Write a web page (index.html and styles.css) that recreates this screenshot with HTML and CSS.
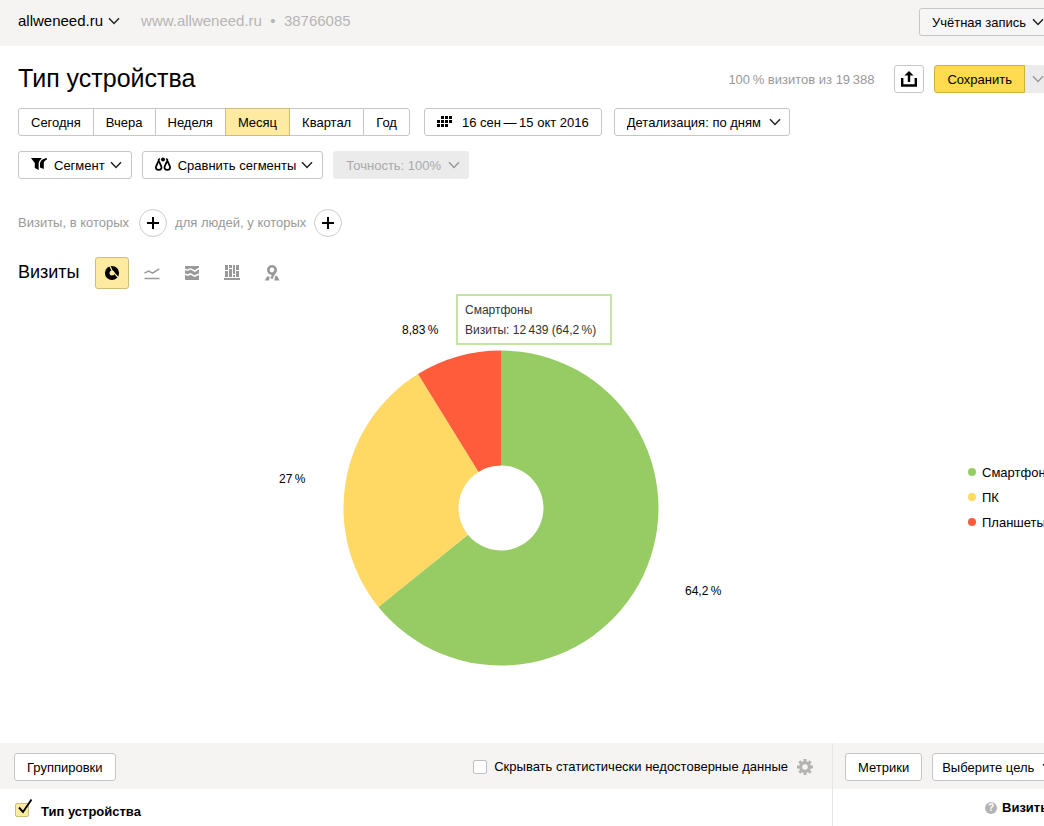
FILE: index.html
```html
<!DOCTYPE html>
<html lang="ru">
<head>
<meta charset="utf-8">
<title>Тип устройства</title>
<meta name="viewport" content="width=device-width, initial-scale=1">
<link rel="stylesheet" href="styles.css">
</head>
<body>
<svg class="sprite" aria-hidden="true">
  <symbol id="chevron" viewBox="0 0 12 8"><path d="M1 1.2 6 6.4 11 1.2" fill="none" stroke="currentColor" stroke-width="1.5"/></symbol>
  <symbol id="plus" viewBox="0 0 12 12"><path d="M6 0v12M0 6h12" stroke="currentColor" stroke-width="2"/></symbol>
</svg>

<header class="topbar">
  <button class="site" type="button">allweneed.ru <svg class="chevron"><use href="#chevron"/></svg></button>
  <span class="site-info">www.allweneed.ru&nbsp; •&nbsp; 38766085</span>
  <button class="btn account" type="button">Учётная запись <svg class="chevron"><use href="#chevron"/></svg></button>
</header>

<main>
  <div class="title-row">
    <h1>Тип устройства</h1>
    <span class="sample">100&#8201;% визитов из 19&#8201;388</span>
    <button class="btn export" type="button" aria-label="Экспорт">
      <svg width="16" height="16" viewBox="0 0 16 16"><path d="M1.2 7v7.5h13.6V7" fill="none" stroke="#000" stroke-width="2.4"/><path d="M8 0l4.6 4.6H9.2V11H6.8V4.6H3.4z"/></svg>
    </button>
    <div class="save-group">
      <button class="btn save" type="button">Сохранить</button>
      <button class="save-more" type="button" aria-label="Ещё" disabled><svg class="chevron"><use href="#chevron"/></svg></button>
    </div>
  </div>

  <div class="toolbar">
    <div class="periods" role="group" aria-label="Период">
      <button type="button">Сегодня</button>
      <button type="button">Вчера</button>
      <button type="button">Неделя</button>
      <button class="active" type="button" aria-pressed="true">Месяц</button>
      <button type="button">Квартал</button>
      <button type="button">Год</button>
    </div>
    <button class="btn dates" type="button">
      <svg width="16" height="12" viewBox="0 0 16 12"><path d="M4 0h3v3H4zM8 0h3v3H8zM12 0h3v3h-3zM0 4h3v3H0zM4 4h3v3H4zM8 4h3v3H8zM12 4h3v3h-3zM0 8h3v3H0zM4 8h3v3H4zM8 8h3v3H8z"/></svg>
      16 сен&#8201;—&#8201;15 окт 2016
    </button>
    <div class="picker">
      <select aria-label="Детализация"><option>Детализация: по дням</option></select>
      <svg class="chevron"><use href="#chevron"/></svg>
    </div>
  </div>

  <div class="toolbar segments">
    <button class="btn" type="button">
      <svg class="lead" width="16" height="14" viewBox="0 0 16 14"><path d="M0 1h11L7.8 5.6V13L3.8 11V6z"/><path d="M16 1.2V2.6C14 3.4 13 4.6 12.8 6V12L9 10.6V6.4C9.4 3.6 12 1.2 16 1.2z"/><path d="M11.6 1.2C9.4 2.8 8.4 4.4 8.3 6.4V12" fill="none" stroke="#fff" stroke-width=".9"/></svg>
      Сегмент <svg class="chevron"><use href="#chevron"/></svg>
    </button>
    <button class="btn" type="button">
      <svg class="lead" width="16" height="14" viewBox="0 0 16 14"><path d="M3.7 3.6 1.4 8.6C.2 11.2 1.4 12.9 3.7 12.9S7.2 11.2 6 8.6zM12.3 3.6 10 8.6c-1.2 2.6 0 4.3 2.3 4.3s3.5-1.7 2.3-4.3z" fill="none" stroke="#000" stroke-width="1.8"/><path d="M3 3 5 1.6M13 3 11 1.6" stroke="#000" stroke-width="1.3"/><circle cx="8" cy="2.4" r="2"/></svg>
      Сравнить сегменты <svg class="chevron"><use href="#chevron"/></svg>
    </button>
    <div class="picker picker-off">
      <select aria-label="Точность" disabled><option>Точность: 100%</option></select>
      <svg class="chevron"><use href="#chevron"/></svg>
    </div>
  </div>

  <div class="filters">
    <span>Визиты, в которых</span>
    <button class="add" type="button" aria-label="Добавить условие визита"><svg width="12" height="12"><use href="#plus"/></svg></button>
    <span>для людей, у которых</span>
    <button class="add" type="button" aria-label="Добавить условие для людей"><svg width="12" height="12"><use href="#plus"/></svg></button>
  </div>

  <div class="views">
    <h2>Визиты</h2>
    <button class="view active" type="button" aria-label="Круговая диаграмма">
      <svg width="16" height="16" viewBox="0 0 16 16"><circle cx="8" cy="8" r="4.8" fill="none" stroke="#000" stroke-width="4.6"/><path d="M5.4 0 8.2 6 15 13.4" fill="none" stroke="#ffeba0" stroke-width="1.3"/></svg>
    </button>
    <button class="view" type="button" aria-label="Линии">
      <svg width="16" height="16" viewBox="0 0 16 16"><path d="M.5 8.2 4.6 6l4 2.2 6.6-4.4M.5 13.4h15" fill="none" stroke="currentColor" stroke-width="1.5"/></svg>
    </button>
    <button class="view" type="button" aria-label="Области">
      <svg width="16" height="16" viewBox="0 0 16 16"><path d="M1 1h14v1.4L10.6 5.2 6.4 3 3.6 4.4 1 3.4zM1 5l2.8 1 2.6-1.4 4.4 2.4L15 4.4v3.8l-4.6 2L6.4 8 3.8 9.2 1 8.4zM1 10l3 1 2.4-1.2 4.2 2.2 4.4-2V15H1z"/></svg>
    </button>
    <button class="view" type="button" aria-label="Столбцы">
      <svg width="16" height="16" viewBox="0 0 16 16"><path d="M1 0h3v5H1zM1 6h3v6H1zM5 0h3v3H5zM5 4h3v8H5zM9 0h2v9H9zM9 10h2v2H9zM12 0h3v5h-3zM12 6h3v6h-3zM0 13h16v2H0z"/></svg>
    </button>
    <button class="view" type="button" aria-label="Карта">
      <svg width="16" height="16" viewBox="0 0 16 16"><circle cx="8" cy="5" r="3.7" fill="none" stroke="currentColor" stroke-width="2.6"/><path d="M11 6.4 7.4 13.6" stroke="currentColor" stroke-width="2.4"/><path d="M3 11.5h2.6L5 15.5H.8zM11.4 10.8h1.6l2.6 4.7h-5.4z"/></svg>
    </button>
  </div>

  <section class="chart">
    <div class="plot">
      <svg width="460" height="346" viewBox="271 320 460 346" role="img" aria-label="Визиты по типу устройства">
        <path fill="#97cc64" d="M501 350.5A157.5 157.5 0 1 1 378.4 606.9L467.9 534.7A42.5 42.5 0 1 0 501 465.5z"/>
        <path fill="#ffd963" d="M378.4 606.9A157.5 157.5 0 0 1 418 374.1L478.6 471.9A42.5 42.5 0 0 0 467.9 534.7z"/>
        <path fill="#ff5c3c" d="M418 374.1A157.5 157.5 0 0 1 501 350.5V465.5A42.5 42.5 0 0 0 478.6 471.9z"/>
        <text x="402" y="334">8,83&#8201;%</text>
        <text x="279" y="483">27&#8201;%</text>
        <text x="685" y="595">64,2&#8201;%</text>
      </svg>
      <div class="tip">Смартфоны<br>Визиты: 12&#8201;439 (64,2&#8201;%)</div>
    </div>
    <ul class="legend">
      <li class="phones">Смартфоны</li>
      <li class="desktops">ПК</li>
      <li class="tablets">Планшеты</li>
    </ul>
  </section>

  <section class="data">
    <div class="bar bar-left">
      <button class="btn" type="button">Группировки</button>
      <label class="hide-noise"><input type="checkbox"> Скрывать статистически недостоверные данные</label>
      <button class="gear" type="button" aria-label="Настройки">
        <svg width="16" height="16" viewBox="0 0 16 16"><circle cx="8" cy="8" r="4.4" fill="none" stroke="currentColor" stroke-width="3.2"/><path d="M8 0v3M8 13v3M0 8h3M13 8h3M2.3 2.3l2 2M11.7 11.7l2 2M13.7 2.3l-2 2M4.3 11.7l-2 2" stroke="currentColor" stroke-width="3"/></svg>
      </button>
    </div>
    <div class="bar bar-right">
      <button class="btn" type="button">Метрики</button>
      <div class="picker goal">
        <select aria-label="Цель"><option>Выберите цель</option></select>
        <svg class="chevron"><use href="#chevron"/></svg>
      </div>
    </div>
    <div class="head head-left">
      <label class="group">
        <span class="check"><input type="checkbox" checked><svg width="18" height="18" viewBox="0 0 18 18"><path d="M4 9.5 8 14 16.5 1.5" fill="none" stroke="#000" stroke-width="1.9"/></svg></span>
        Тип устройства
      </label>
    </div>
    <div class="head head-right">
      <span class="help">?</span><b>Визиты</b>
    </div>
  </section>
</main>
</body>
</html>
```

FILE: styles.css
```css
* { box-sizing: border-box; }

body {
  margin: 0;
  overflow: hidden;
  background: #fff;
  color: #000;
  font: 13px/16px "Liberation Sans", Arial, sans-serif;
  white-space: nowrap;
}

h1, h2, ul { margin: 0; padding: 0; font-weight: normal; }
button, select { font: inherit; color: inherit; margin: 0; }
svg { display: block; flex: none; fill: currentColor; }
.sprite { position: absolute; width: 0; height: 0; }
.chevron { width: 12px; height: 8px; color: #222; }

.btn, .picker select {
  height: 28px;
  padding: 2px 12px 0;
  border: 1px solid #c6c6c6;
  border-radius: 3px;
  background: #fff;
}
.btn { display: flex; align-items: center; gap: 6px; flex: none; }
.btn .chevron { margin-bottom: 2px; }
.lead { margin: 0 2px 4px 0; }

.picker { position: relative; flex: none; }
.picker select {
  display: block;
  appearance: none;
  padding-right: 27px;
  opacity: 1;
}
.picker .chevron { position: absolute; right: 9px; top: 10px; pointer-events: none; }
.picker-off select { background: #ebebeb; border-color: #ebebeb; color: #aaa; }
.picker-off .chevron { color: #999; }

.topbar {
  display: flex;
  align-items: center;
  height: 46px;
  padding: 0 0 2px 18px;
  background: #f5f4f3;
  font-size: 15px;
}
.site {
  display: flex;
  align-items: center;
  gap: 5px;
  padding: 0 0 2px;
  border: 0;
  background: none;
}
.site-info { flex: 1; padding: 0 0 2px 21px; color: #b5b5b5; }
.account { font-size: 13px; background: #f7f6f6; margin-right: -13px; }

.title-row {
  display: flex;
  align-items: center;
  height: 28px;
  margin: 19px -8px 15px 18px;
}
h1 { flex: 1; padding-bottom: 2px; font-size: 25px; line-height: 28px; }
.sample { padding-top: 1px; color: #999; }
.export { width: 30px; margin: 0 10px 0 20px; padding: 0; justify-content: center; }
.save-group { display: flex; }
.save { background: #ffdb4d; border-color: #ccaf3d; border-radius: 3px 0 0 3px; }
.save-more { width: 27px; padding: 0 7px; border: 0; background: #ebebeb; }
.save-more .chevron { color: #999; }

.toolbar { display: flex; padding-left: 18px; margin-bottom: 15px; }
.periods { display: flex; margin-right: 14px; }
.periods button {
  height: 28px;
  margin-left: -1px;
  padding: 2px 12px 0;
  border: 1px solid #c6c6c6;
  background: #fff;
}
.periods button:first-child { margin-left: 0; border-radius: 3px 0 0 3px; }
.periods button:last-child { border-radius: 0 3px 3px 0; }
.periods .active { position: relative; background: #ffeba0; border-color: #ccbc80; }
.dates { margin-right: 12px; gap: 9px; }
.dates svg { margin-bottom: 2px; }
.segments { gap: 10px; margin-bottom: 30px; }
.segments .btn { gap: 5px; padding-right: 9px; }

.filters { display: flex; align-items: center; gap: 8px; padding-left: 18px; margin-bottom: 20px; color: #999; }
.add {
  display: flex;
  align-items: center;
  justify-content: center;
  width: 28px;
  height: 28px;
  padding: 0;
  border: 1px solid #ccc;
  border-radius: 50%;
  background: #fff;
  color: #000;
}
.filters span:first-child { margin-right: 2px; }

.views { display: flex; align-items: center; padding-left: 18px; }
h2 { margin-right: 15px; padding-bottom: 2px; font-size: 18px; line-height: 20px; }
.view {
  display: flex;
  align-items: center;
  justify-content: center;
  width: 34px;
  height: 32px;
  margin-right: 6px;
  padding: 0;
  border: 1px solid transparent;
  border-radius: 3px;
  background: none;
  color: #999;
}
.view.active { background: #ffeba0; border-color: #ccbc80; }

.chart { display: flex; align-items: center; padding: 31px 0 77px 34px; font-size: 12px; }
.plot { position: relative; flex: 1; display: flex; justify-content: center; }
.tip {
  position: absolute;
  left: calc(50% - 45px);
  top: -26px;
  padding: 4px 14px 3px 7px;
  border: 2px solid #c3e4a3;
  background: #fff;
  color: #333;
  line-height: 20px;
}
.legend { width: 76px; padding-top: 8px; list-style: none; font-size: 13px; line-height: 25px; }
.legend li { display: flex; align-items: center; gap: 6px; }
.legend li::before { content: ""; flex: none; width: 8px; height: 8px; border-radius: 50%; }
.phones::before { background: #97cc64; }
.desktops::before { background: #ffd963; }
.tablets::before { background: #ff5c3c; }

.data { display: grid; grid-template-columns: minmax(0, 1fr) 212px; }
.bar { display: flex; align-items: center; height: 46px; padding: 2px 0 0; background: #f5f4f3; }
.bar-left { padding-left: 14px; padding-right: 19px; }
.bar-right { padding-left: 12px; gap: 10px; border-left: 1px solid #e5e5e5; }
.goal select { padding-left: 9px; }
.hide-noise { display: flex; align-items: center; gap: 7px; margin-left: auto; }
input[type="checkbox"] {
  appearance: none;
  flex: none;
  width: 14px;
  height: 14px;
  margin: 0;
  border: 1px solid #bfbfbf;
  border-radius: 2px;
  background: #fff;
}
.gear { margin-left: 9px; padding: 0; border: 0; background: none; color: #b3b3b3; }
.head { height: 37px; display: flex; align-items: center; }
.head-left { padding: 8px 0 0 15px; font-weight: bold; }
.head-right { gap: 5px; padding-left: 152px; border-left: 1px solid #e5e5e5; }
.group { display: flex; align-items: center; gap: 12px; }
.check { position: relative; display: block; height: 18px; }
.check input:checked { background: #ffeba0; border-color: #ccbc80; }
.check svg { position: absolute; left: 0; top: -5px; pointer-events: none; }
.help {
  flex: none;
  width: 12px;
  height: 12px;
  border-radius: 50%;
  background: #b3b3b3;
  color: #fff;
  font: bold 10px/12px "Liberation Sans", Arial, sans-serif;
  text-align: center;
}
```
